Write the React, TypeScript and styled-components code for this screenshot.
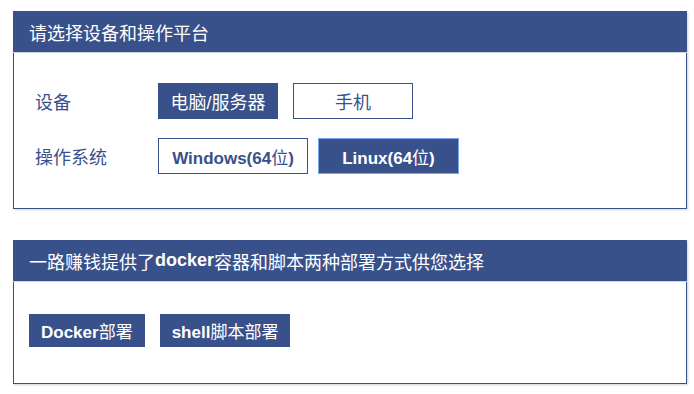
import { FunctionComponent } from "react";
import styled, { createGlobalStyle } from "styled-components";

const primary = "#39518a";

const GlobalStyle = createGlobalStyle`
  body {
    margin: 0;
    background: #ffffff;
    font-family: "Liberation Sans", "Noto Sans CJK SC", sans-serif;
  }
`;

const Page = styled.div`
  padding: 11px 7px 10px 13px;
  display: flex;
  flex-direction: column;
  gap: 31px;
`;

const Panel = styled.section`
  width: 674px;
  box-sizing: border-box;
  border: 1px solid ${primary};
  border-top: none;
  box-shadow: 1px 1px 2px rgba(0, 0, 0, 0.18);
  background: #ffffff;
`;

const Header = styled.div`
  height: 41px;
  margin: 0 -1px;
  padding: 0 16px;
  background: ${primary};
  border-bottom: 1px solid #cdd2dd;
  color: #ffffff;
  font-size: 18px;
  display: flex;
  align-items: center;
  white-space: nowrap;
  b {
    font-weight: 700;
  }
`;

const Body = styled.div<{ $pad: string }>`
  padding: ${(p) => p.$pad};
  display: flex;
  flex-direction: column;
  gap: 19px;
`;

const Row = styled.div`
  display: flex;
  align-items: center;
`;

const Label = styled.div`
  width: 123px;
  color: ${primary};
  font-size: 18px;
`;

const Buttons = styled.div<{ $gap: number }>`
  display: flex;
  gap: ${(p) => p.$gap}px;
`;

// the CJK glyphs in the bold buttons stay regular weight
const Han = styled.span`
  font-weight: 400;
`;

const Choice = styled.button<{ $w: number; $active?: boolean; $bold?: boolean; $focus?: boolean }>`
  width: ${(p) => p.$w}px;
  height: 36px;
  box-sizing: border-box;
  padding: 0;
  font-family: "Liberation Sans", "Noto Sans CJK SC", sans-serif;
  font-size: ${(p) => (p.$bold ? "17px" : "18px")};
  font-weight: ${(p) => (p.$bold ? 700 : 400)};
  color: ${(p) => (p.$active ? "#ffffff" : primary)};
  background: ${(p) => (p.$active ? primary : "#ffffff")};
  border: 1px solid ${(p) => (p.$focus ? "#7ba6ec" : primary)};
  cursor: pointer;
`;

const Deploy = styled.button`
  height: 33px;
  padding: 0 12px;
  box-sizing: border-box;
  font-family: "Liberation Sans", "Noto Sans CJK SC", sans-serif;
  font-size: 17px;
  font-weight: 700;
  color: #ffffff;
  background: ${primary};
  border: none;
  cursor: pointer;
`;

const App: FunctionComponent = () => {
  return (
    <>
      <GlobalStyle />
      <Page>
        <Panel>
          <Header>请选择设备和操作平台</Header>
          <Body $pad="30px 20px 34px 21px">
            <Row>
              <Label>设备</Label>
              <Buttons $gap={15}>
                <Choice $w={120} $active>
                  电脑/服务器
                </Choice>
                <Choice $w={120}>手机</Choice>
              </Buttons>
            </Row>
            <Row>
              <Label>操作系统</Label>
              <Buttons $gap={10}>
                <Choice $w={150} $bold>
                  Windows(64<Han>位</Han>)
                </Choice>
                <Choice $w={141} $bold $active $focus>
                  Linux(64<Han>位</Han>)
                </Choice>
              </Buttons>
            </Row>
          </Body>
        </Panel>
        <Panel>
          <Header>
            一路赚钱提供了<b>docker</b>容器和脚本两种部署方式供您选择
          </Header>
          <Body $pad="32px 15px 36px 15px">
            <Buttons $gap={15}>
              <Deploy>
                Docker<Han>部署</Han>
              </Deploy>
              <Deploy>
                shell<Han>脚本部署</Han>
              </Deploy>
            </Buttons>
          </Body>
        </Panel>
      </Page>
    </>
  );
};

export default App;
